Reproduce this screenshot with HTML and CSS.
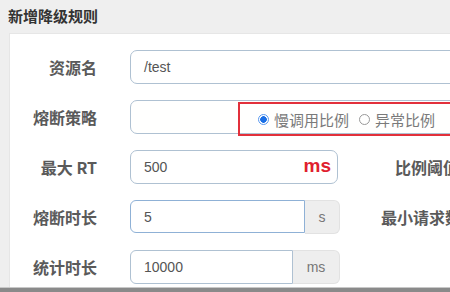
FILE: index.html
```html
<!DOCTYPE html>
<html lang="zh-CN">
<head>
  <meta charset="UTF-8" />
  <title>新增降级规则</title>
  <link rel="stylesheet" href="styles.css">
</head>
<body>
  <h1 class="title">新增降级规则</h1>

  <div class="panel">
    <div class="row">
      <label class="label">资源名</label>
      <div class="control wide"><span class="value">/test</span></div>
    </div>

    <div class="row">
      <label class="label">熔断策略</label>
      <div class="control wide strategy">
        <div class="mark">
          <span class="radio checked"></span><span class="opt">慢调用比例</span>
          <span class="radio"></span><span class="opt">异常比例</span>
        </div>
      </div>
    </div>

    <div class="row">
      <label class="label">最大 RT</label>
      <div class="control rt"><span class="value">500</span><span class="unit-red">ms</span></div>
      <label class="label side">比例阈值</label>
    </div>

    <div class="row">
      <label class="label">熔断时长</label>
      <div class="group">
        <div class="control square focus dur"><span class="value">5</span></div>
        <span class="addon s">s</span>
      </div>
      <label class="label side near">最小请求数</label>
    </div>

    <div class="row">
      <label class="label">统计时长</label>
      <div class="group">
        <div class="control square stat"><span class="value">10000</span></div>
        <span class="addon ms">ms</span>
      </div>
    </div>
  </div>

  <div class="bottom-bar"></div>
</body>
</html>
```

FILE: styles.css
```css
html, body {
  margin: 0;
  height: 292px;
  overflow: hidden;
}
body {
  background-color: #efefef;
  font-family: "Liberation Sans", "Noto Sans CJK SC", sans-serif;
  position: relative;
}
.title {
  margin: 0;
  padding: 8px 0 0 8px;
  height: 25px;
  font-size: 15px;
  font-weight: bold;
  color: #333;
  line-height: 18px;
}
.panel {
  margin-left: 9px;
  width: 640px;
  height: 270px;
  background-color: #fff;
  border-left: 1px solid #e6e6e6;
  border-top: 1px solid #e6e6e6;
  padding-top: 16px;
  display: flex;
  flex-direction: column;
  gap: 16px;
}
.row {
  display: flex;
  align-items: center;
  height: 34px;
}
.label {
  width: 87px;
  text-align: right;
  margin-right: 33px;
  font-family: "Noto Sans CJK SC", sans-serif;
  font-size: 16px;
  font-weight: bold;
  color: #5a5a5a;
  flex-shrink: 0;
}
.label.side {
  width: auto;
  margin-left: 57px;
  margin-right: 0;
  white-space: nowrap;
}
.label.side.near {
  margin-left: 41px;
}
.control {
  box-sizing: border-box;
  height: 34px;
  border: 1px solid #afc1d2;
  border-radius: 7px;
  display: flex;
  align-items: center;
  padding-left: 13px;
  background-color: #fff;
}
.value {
  font-size: 14px;
  color: #555;
}
.wide {
  flex: 1;
  margin-right: -20px;
}
.strategy {
  position: relative;
  background-color: #fffffe;
}
.mark {
  position: absolute;
  left: 107px;
  top: 1px;
  right: 0;
  height: 34px;
  box-sizing: border-box;
  border: 2px solid #e2303b;
  display: flex;
  align-items: center;
  padding-left: 16px;
}
.radio {
  width: 11px;
  height: 11px;
  border-radius: 50%;
  border: 1px solid #999;
  box-sizing: border-box;
  margin-right: 5px;
  margin-left: 2px;
}
.radio.checked {
  border: 1px solid #5b9af0;
  background: radial-gradient(circle, #1a6fe6 0 3px, #fff 3.6px);
}
.opt {
  font-family: "Noto Sans CJK SC", sans-serif;
  font-size: 15px;
  color: #7a7a7a;
  margin-right: 8px;
}
.rt {
  width: 208px;
  justify-content: space-between;
  padding-right: 6px;
}
.unit-red {
  font-size: 19px;
  font-weight: bold;
  color: #e0202e;
  margin-bottom: 2px;
}
.group {
  display: flex;
  height: 34px;
}
.square {
  border-radius: 6px 0 0 6px;
}
.focus {
  border-color: #8fb1d6;
  height: 33px;
}
.dur {
  width: 175px;
}
.stat {
  width: 163px;
}
.addon {
  box-sizing: border-box;
  height: 34px;
  display: flex;
  align-items: center;
  justify-content: center;
  background-color: #eeeeee;
  border: 1px solid #e2e2e2;
  border-left: none;
  border-radius: 0 6px 6px 0;
  font-size: 14px;
  color: #777;
}
.addon.s {
  width: 35px;
}
.addon.ms {
  width: 47px;
}
.bottom-bar {
  position: absolute;
  left: 0;
  right: 0;
  bottom: 0;
  height: 4px;
  background-color: #8a8a8a;
  border-top: 1px solid #c8c8c8;
}
```
